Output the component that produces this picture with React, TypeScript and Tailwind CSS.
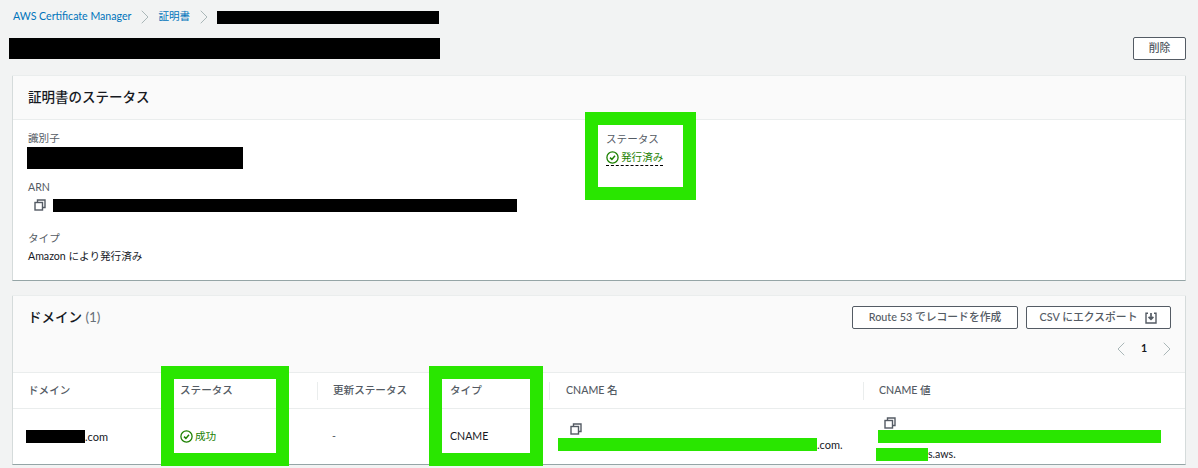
import { ChevronLeft, ChevronRight } from "lucide-react";

const font = { fontFamily: '"Lato", "Noto Sans CJK JP", sans-serif' };

const CopyIcon = () => (
  <svg width="12" height="12" viewBox="0 0 12 12" fill="none" stroke="#545b64" strokeWidth="1.4">
    <rect x="1" y="3.5" width="7.5" height="7.5" />
    <path d="M3.5 3.5V1H11V8.5H8.5" />
  </svg>
);

const CheckIcon = () => (
  <svg width="13" height="13" viewBox="0 0 13 13" fill="none" stroke="#1d8102" strokeWidth="1.3" className="shrink-0">
    <circle cx="6.5" cy="6.5" r="5.6" />
    <path d="M4 6.6L5.9 8.4L9 4.8" strokeWidth="1.5" />
  </svg>
);

const DownloadIcon = () => (
  <svg width="12" height="12" viewBox="0 0 12 12" fill="none" stroke="#545b64" strokeWidth="1.4">
    <path d="M3 1.2H1V11H11V1.2H9" />
    <path d="M6 1V7M3.6 4.8L6 7.2L8.4 4.8" strokeWidth="1.7" />
  </svg>
);

const Chevron = () => <ChevronRight size={24} strokeWidth={1} className="text-[#aab7b8] mx-[1.5px]" />;

const Button = ({ children, className }: { children: React.ReactNode; className: string }) => (
  <button className={`h-[23px] border border-[#545b64] rounded-[2px] bg-white text-[10.8px] font-medium text-[#545b64] flex items-center justify-center ${className}`}>
    {children}
  </button>
);

const Frame = ({ className }: { className: string }) => (
  <div className={`absolute border-[13px] border-[#29e600] ${className}`} />
);

const headers = [
  { label: "ドメイン", className: "pl-[15px]" },
  { label: "ステータス", className: "pl-[15px]" },
  { label: "更新ステータス", className: "pl-[15px] border-l border-[#eaeded]" },
  { label: "タイプ", className: "pl-[17px]" },
  { label: "CNAME 名", className: "pl-[16px] border-l border-[#eaeded]" },
  { label: "CNAME 値", className: "pl-[15px] border-l border-[#eaeded]" },
];

export default function App() {
  return (
    <div className="relative w-[1198px] h-[468px] overflow-hidden bg-[#f2f3f3] text-[10.6px] text-[#16191f]" style={font}>
      <nav className="h-[34px] pl-[13px] flex items-center text-[#0073bb]">
        <span>AWS Certificate Manager</span>
        <Chevron />
        <span>証明書</span>
        <Chevron />
        <span className="w-[222px] h-[13px] bg-black" />
      </nav>

      <div className="h-[42px] pl-[9px] pr-3 flex items-start justify-between">
        <div className="w-[431px] h-[21px] mt-[4px] bg-black" />
        <Button className="w-[53px] mt-[3px]">削除</Button>
      </div>

      <section className="mx-3 h-[205px] bg-white border-l border-r border-[#d5dbdb] border-b-[#95a5a6] border-b shadow-[0_-1px_0_#eaeded]">
        <div className="h-[44px] pl-[15px] flex items-center bg-[#fafafa] border-b border-[#eaeded] text-[13.5px] font-medium">
          証明書のステータス
        </div>
        <div className="grid grid-cols-[578px_1fr] pl-[15px] pt-[10px]">
          <div className="flex flex-col">
            <span className="text-[#545b64] leading-[16px]">識別子</span>
            <div className="w-[216px] h-[22px] -ml-px mt-[1px] bg-black" />
            <span className="text-[#545b64] leading-[16px] mt-[10px]">ARN</span>
            <div className="flex items-center mt-[3px] h-[14px]">
              <span className="ml-[6px] mr-[7px] flex"><CopyIcon /></span>
              <div className="w-[464px] h-[13px] bg-black" />
            </div>
            <span className="text-[#545b64] leading-[16px] mt-[18px]">タイプ</span>
            <span className="leading-[16px] mt-[2px]">Amazon により発行済み</span>
          </div>
          <div className="flex flex-col items-start mt-[1px]">
            <span className="text-[#545b64] leading-[16px]">ステータス</span>
            <span className="mt-[3px] flex items-center gap-[2px] text-[#1d8102] leading-[15px] border-b border-dashed border-black">
              <CheckIcon />
              発行済み
            </span>
          </div>
        </div>
      </section>

      <section className="mx-3 mt-[15px] h-[169px] bg-white border-l border-r border-[#d5dbdb] border-b border-b-[#95a5a6] shadow-[0_-1px_0_#eaeded]">
        <div className="h-[77px] bg-[#fafafa] border-b border-[#eaeded] pl-[15px] pr-[14px] flex justify-between">
          <h2 className="mt-[11px] text-[13.5px] font-medium leading-[20px]">
            ドメイン <span className="font-normal text-[#687078]">(1)</span>
          </h2>
          <div className="flex flex-col items-end pt-[10px]">
            <div className="flex gap-2">
              <Button className="w-[166px]">Route 53 でレコードを作成</Button>
              <Button className="w-[145px] gap-2">CSV にエクスポート <DownloadIcon /></Button>
            </div>
            <div className="flex items-center gap-2 mt-[8px] -mr-2 h-[24px]">
              <ChevronLeft size={24} strokeWidth={1} className="text-[#aab7b8]" />
              <span className="font-bold w-[6px] text-center">1</span>
              <ChevronRight size={24} strokeWidth={1} className="text-[#aab7b8]" />
            </div>
          </div>
        </div>

        <div className="grid grid-cols-[152px_152px_116px_116px_314px_1fr]">
          {headers.map((h) => (
            <div key={h.label} className="h-[36px] flex items-center border-b border-[#eaeded]">
              <div className={`h-[18px] flex items-center font-medium text-[#545b64] w-full ${h.className}`}>{h.label}</div>
            </div>
          ))}
          <div className="h-[54px] pl-[13px] pt-[21px] flex items-start leading-[13px]">
            <span className="w-[59px] h-[13px] bg-black" />
            <span className="text-[11px]">.com</span>
          </div>
          <div className="h-[54px] pl-[15px] pt-[21px] flex items-start gap-[2px] text-[#1d8102] leading-[13px]">
            <CheckIcon />
            成功
          </div>
          <div className="h-[54px] pl-[15px] pt-[21px] leading-[13px] text-[#545b64]">-</div>
          <div className="h-[54px] pl-[17px] pt-[21px] leading-[13px]">CNAME</div>
          <div className="h-[54px] pl-[9px] pt-[14px]">
            <div className="ml-[12px] flex"><CopyIcon /></div>
            <div className="flex items-center mt-[3px] leading-[13px]">
              <span className="w-[259px] h-[13px] bg-[#29e600]" />
              <span className="text-[11px]">.com.</span>
            </div>
          </div>
          <div className="h-[54px] pl-[13px] pt-[8px]">
            <div className="ml-[8px] flex"><CopyIcon /></div>
            <div className="w-[283px] h-[13px] ml-[2px] mt-[1px] bg-[#29e600]" />
            <div className="flex items-center mt-[5px] leading-[13px]">
              <span className="w-[52px] h-[13px] bg-[#29e600]" />
              <span>s.aws.</span>
            </div>
          </div>
        </div>
      </section>

      <Frame className="left-[585px] top-[112px] w-[111px] h-[88px]" />
      <Frame className="left-[161px] top-[366px] w-[128px] h-[100px]" />
      <Frame className="left-[429px] top-[366px] w-[114px] h-[100px]" />
    </div>
  );
}
